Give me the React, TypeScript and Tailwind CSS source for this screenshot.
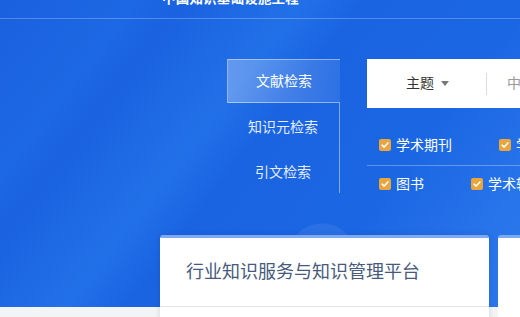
const font = "font-['Liberation_Sans','Noto_Sans_CJK_SC',sans-serif]";

const Check = ({ label }: { label: string }) => (
    <div className="flex items-center gap-[5px] shrink-0">
        <span className="w-[12px] h-[12px] rounded-[2px] bg-[#eba53a] flex items-center justify-center">
            <svg viewBox="0 0 12 12" className="w-[10px] h-[10px]">
                <path d="M2.5 6.2 L5 8.5 L9.5 3.5" fill="none" stroke="#fff" strokeWidth="1.8" strokeLinecap="round" strokeLinejoin="round" />
            </svg>
        </span>
        <span className="text-[14px] leading-[20px] text-white">{label}</span>
    </div>
)

const App = () => {
    return (
        <div className={`w-[520px] h-[317px] overflow-hidden flex flex-col bg-[#f3f4f6] ${font}`}>
            {/* blue banner */}
            <div className="h-[307px] shrink-0 flex flex-col bg-[#1b64e2] bg-[radial-gradient(circle_at_322px_258px,rgba(255,255,255,0.07)_0_34px,transparent_35px),linear-gradient(128deg,#1a60de_0%,#1d68e4_18%,#1a62e0_24%,#2270e8_40%,#1a64e2_48%,#1b66e3_70%,#2874ea_88%,#2a78ec_100%)]">
                <div className="h-[19px] shrink-0 border-b border-white/25 pl-[162px]">
                    <div className="-mt-[9px] text-[13.5px] leading-[16px] font-bold text-white tracking-[0.2px]">
                        中国知识基础设施工程
                    </div>
                </div>

                <div className="flex mt-[40px] pl-[227px]">
                    {/* tabs */}
                    <div className="w-[113px] shrink-0 flex flex-col">
                        <div className="h-[44px] flex items-center justify-center border border-r-0 border-white/45 bg-[linear-gradient(100deg,rgba(255,255,255,0.3),rgba(255,255,255,0.08))] text-[14px] text-white pt-[1px]">
                            文献检索
                        </div>
                        <div className="border-r border-white/45 flex flex-col">
                            <div className="h-[48px] flex items-center justify-center text-[14px] text-[#e4edff]">知识元检索</div>
                            <div className="h-[42px] flex items-center justify-center text-[14px] text-[#e4edff]">引文检索</div>
                        </div>
                    </div>

                    {/* search */}
                    <div className="ml-[27px] flex-1 min-w-0 flex flex-col">
                        <div className="h-[49px] bg-white flex items-center pl-[39px] whitespace-nowrap">
                            <span className="text-[14px] text-[#333] shrink-0">主题</span>
                            <svg viewBox="0 0 10 6" className="w-[8px] h-[5px] ml-[7px] shrink-0">
                                <path d="M0 0 L10 0 L5 6 Z" fill="#777" />
                            </svg>
                            <span className="w-px h-[22px] bg-[#dcdcdc] ml-[37px] shrink-0" />
                            <span className="ml-[20px] text-[14px] text-[#999] shrink-0">中文文献、外文文献</span>
                        </div>
                        <div className="mt-[17px] h-[41px] border-b border-white/30 flex items-center pl-[12px] gap-[47px] whitespace-nowrap pb-[1px]">
                            <Check label="学术期刊" />
                            <Check label="学位论文" />
                        </div>
                        <div className="h-[36px] flex items-center pl-[12px] gap-[47px] whitespace-nowrap">
                            <Check label="图书" />
                            <Check label="学术辑刊" />
                        </div>
                    </div>
                </div>
            </div>

            {/* cards */}
            <div className="-mt-[72px] flex gap-[9px] pl-[160px]">
                <div className="w-[329px] h-[90px] shrink-0 bg-white rounded-t-[3px] border-t-[3px] border-[#7ea9f2] shadow-[0_0_6px_rgba(0,0,0,0.12)]">
                    <div className="h-[69px] border-b border-[#e3e3e3] pl-[26px] pt-[22px]">
                        <span className="text-[18px] leading-[24px] text-[#475a7c]">行业知识服务与知识管理平台</span>
                    </div>
                </div>
                <div className="w-[329px] h-[90px] shrink-0 bg-white rounded-t-[3px] border-t-[3px] border-[#7ea9f2]" />
            </div>
        </div>
    )
}

export default App
